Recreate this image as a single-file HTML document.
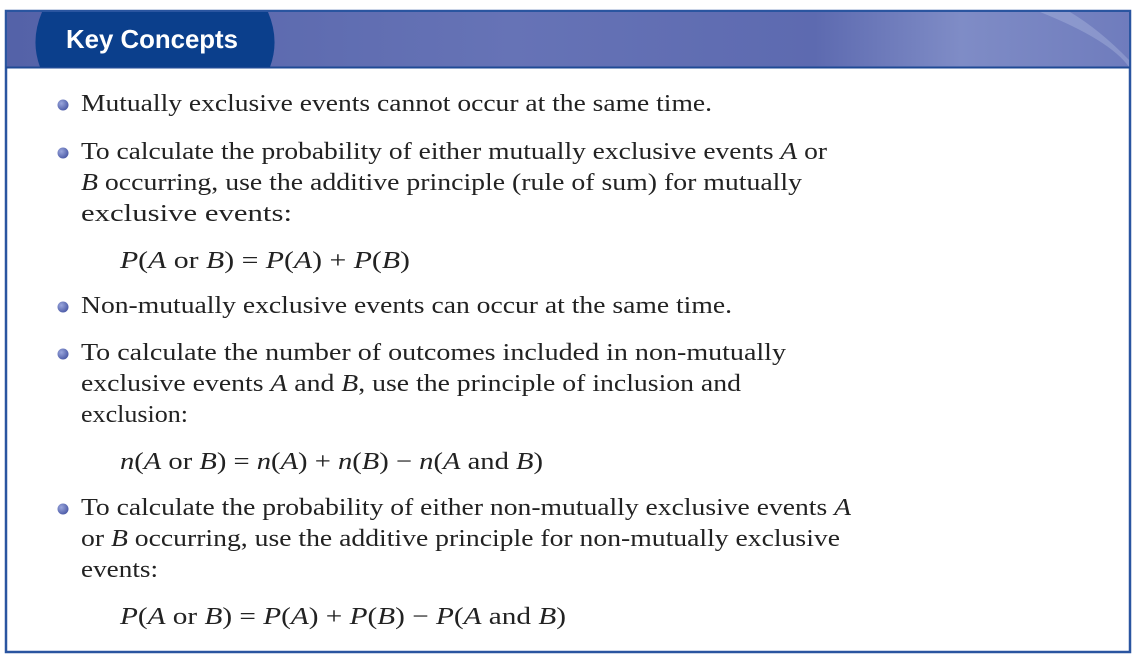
<!DOCTYPE html>
<html><head><meta charset="utf-8"><style>
body{margin:0;background:#fff;width:1135px;height:662px;overflow:hidden}
</style></head><body>
<svg width="1135" height="662" xmlns="http://www.w3.org/2000/svg" style="position:absolute;left:0;top:0">
<defs>
<linearGradient id="hg" x1="0" x2="1" y1="0" y2="0">
<stop offset="0" stop-color="#5462a8"/>
<stop offset="0.45" stop-color="#6673b6"/>
<stop offset="0.72" stop-color="#5d6ab0"/>
<stop offset="0.85" stop-color="#7f8cc6"/>
<stop offset="1" stop-color="#6f7cbd"/>
</linearGradient>
<radialGradient id="bl" cx="0.35" cy="0.35" r="0.7">
<stop offset="0" stop-color="#9aa6dc"/><stop offset="1" stop-color="#4b5aa6"/>
</radialGradient>
</defs>
<rect x="6" y="11" width="1124" height="641" fill="#fff" stroke="#2a55a0" stroke-width="2.5"/>
<rect x="7" y="12" width="1122" height="55" fill="url(#hg)"/>
<path d="M1040 12 Q1110 40 1129 67 L1129 60 Q1100 30 1070 12Z" fill="#b8c2e6" opacity="0.35"/>
<line x1="6" y1="67.5" x2="1130" y2="67.5" stroke="#1f4a95" stroke-width="2"/>
<path d="M42 12 L268 12 Q280 40 270 67 L40 67 Q30 40 42 12Z" fill="#0b3f8c"/>
<text x="66" y="48" font-family="Liberation Sans, sans-serif" font-weight="bold" font-size="26" fill="#fff" textLength="172" lengthAdjust="spacingAndGlyphs">Key Concepts</text>
<g fill="url(#bl)">
<circle cx="63" cy="105" r="5.5"/><circle cx="63" cy="153" r="5.5"/><circle cx="63" cy="307" r="5.5"/><circle cx="63" cy="354" r="5.5"/><circle cx="63" cy="509" r="5.5"/>
</g>
<g font-family="Liberation Serif, serif" font-size="24" fill="#222">
<text x="81" y="111" textLength="631" lengthAdjust="spacingAndGlyphs">Mutually exclusive events cannot occur at the same time.</text>
<text x="81" y="159" textLength="746" lengthAdjust="spacingAndGlyphs">To calculate the probability of either mutually exclusive events <tspan font-style="italic">A</tspan> or</text>
<text x="81" y="190" textLength="721" lengthAdjust="spacingAndGlyphs"><tspan font-style="italic">B</tspan> occurring, use the additive principle (rule of sum) for mutually</text>
<text x="81" y="221" textLength="211" lengthAdjust="spacingAndGlyphs">exclusive events:</text>
<text x="120" y="268" textLength="290" lengthAdjust="spacingAndGlyphs"><tspan font-style="italic">P</tspan>(<tspan font-style="italic">A</tspan> or <tspan font-style="italic">B</tspan>) = <tspan font-style="italic">P</tspan>(<tspan font-style="italic">A</tspan>) + <tspan font-style="italic">P</tspan>(<tspan font-style="italic">B</tspan>)</text>
<text x="81" y="313" textLength="651" lengthAdjust="spacingAndGlyphs">Non-mutually exclusive events can occur at the same time.</text>
<text x="81" y="360" textLength="705" lengthAdjust="spacingAndGlyphs">To calculate the number of outcomes included in non-mutually</text>
<text x="81" y="391" textLength="660" lengthAdjust="spacingAndGlyphs">exclusive events <tspan font-style="italic">A</tspan> and <tspan font-style="italic">B</tspan>, use the principle of inclusion and</text>
<text x="81" y="422" textLength="107" lengthAdjust="spacingAndGlyphs">exclusion:</text>
<text x="120" y="469" textLength="423" lengthAdjust="spacingAndGlyphs"><tspan font-style="italic">n</tspan>(<tspan font-style="italic">A</tspan> or <tspan font-style="italic">B</tspan>) = <tspan font-style="italic">n</tspan>(<tspan font-style="italic">A</tspan>) + <tspan font-style="italic">n</tspan>(<tspan font-style="italic">B</tspan>) − <tspan font-style="italic">n</tspan>(<tspan font-style="italic">A</tspan> and <tspan font-style="italic">B</tspan>)</text>
<text x="81" y="515" textLength="770" lengthAdjust="spacingAndGlyphs">To calculate the probability of either non-mutually exclusive events <tspan font-style="italic">A</tspan></text>
<text x="81" y="546" textLength="759" lengthAdjust="spacingAndGlyphs">or <tspan font-style="italic">B</tspan> occurring, use the additive principle for non-mutually exclusive</text>
<text x="81" y="577" textLength="77" lengthAdjust="spacingAndGlyphs">events:</text>
<text x="120" y="624" textLength="446" lengthAdjust="spacingAndGlyphs"><tspan font-style="italic">P</tspan>(<tspan font-style="italic">A</tspan> or <tspan font-style="italic">B</tspan>) = <tspan font-style="italic">P</tspan>(<tspan font-style="italic">A</tspan>) + <tspan font-style="italic">P</tspan>(<tspan font-style="italic">B</tspan>) − <tspan font-style="italic">P</tspan>(<tspan font-style="italic">A</tspan> and <tspan font-style="italic">B</tspan>)</text>
</g>
</svg>
</body></html>
